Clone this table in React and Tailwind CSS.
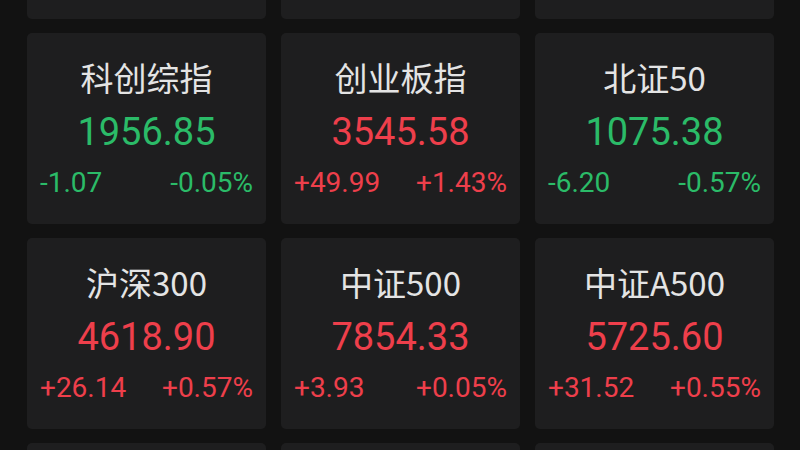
import React from 'react';

const rows = [
  [
    { name: "科创综指", price: "1956.85", diff: "-1.07", pct: "-0.05%", up: false },
    { name: "创业板指", price: "3545.58", diff: "+49.99", pct: "+1.43%", up: true },
    { name: "北证50", price: "1075.38", diff: "-6.20", pct: "-0.57%", up: false },
  ],
  [
    { name: "沪深300", price: "4618.90", diff: "+26.14", pct: "+0.57%", up: true },
    { name: "中证500", price: "7854.33", diff: "+3.93", pct: "+0.05%", up: true },
    { name: "中证A500", price: "5725.60", diff: "+31.52", pct: "+0.55%", up: true },
  ],
];

const IndexCard = ({ item }) => {
  const color = item.up ? "text-[#ee3f4b]" : "text-[#2bbb68]";
  return (
    <div className="h-[191px] rounded-[5px] bg-[#1e1e1f] flex flex-col items-center pt-[28px]">
      <div className="text-[33px] leading-none text-[#e4e4e4] font-['Noto_Sans_CJK_SC',sans-serif]">
        {item.name}
      </div>
      <div className={`mt-[19px] text-[38px] leading-none font-['Roboto',sans-serif] ${color}`}>
        {item.price}
      </div>
      <div className={`mt-[18px] w-full px-[13px] flex justify-between text-[28px] leading-none font-['Roboto',sans-serif] ${color}`}>
        <span>{item.diff}</span>
        <span>{item.pct}</span>
      </div>
    </div>
  );
};

// rows scrolled partly out of view: only the card edges show
const EdgeRow = () => (
  <div className="grid grid-cols-3 gap-[15px]">
    <div className="h-[191px] rounded-[5px] bg-[#1e1e1f]" />
    <div className="h-[191px] rounded-[5px] bg-[#1e1e1f]" />
    <div className="h-[191px] rounded-[5px] bg-[#1e1e1f]" />
  </div>
);

const App = () => {
  return (
    <div className="w-[800px] h-[450px] overflow-hidden bg-[#121212]">
      <div className="-mt-[172px] pl-[27px] pr-[26px] flex flex-col gap-[14px]">
        <EdgeRow />
        {rows.map((row, r) => (
          <div key={r} className="grid grid-cols-3 gap-[15px]">
            {row.map((item, i) => (
              <IndexCard key={i} item={item} />
            ))}
          </div>
        ))}
        <EdgeRow />
      </div>
    </div>
  );
};

export default App;
